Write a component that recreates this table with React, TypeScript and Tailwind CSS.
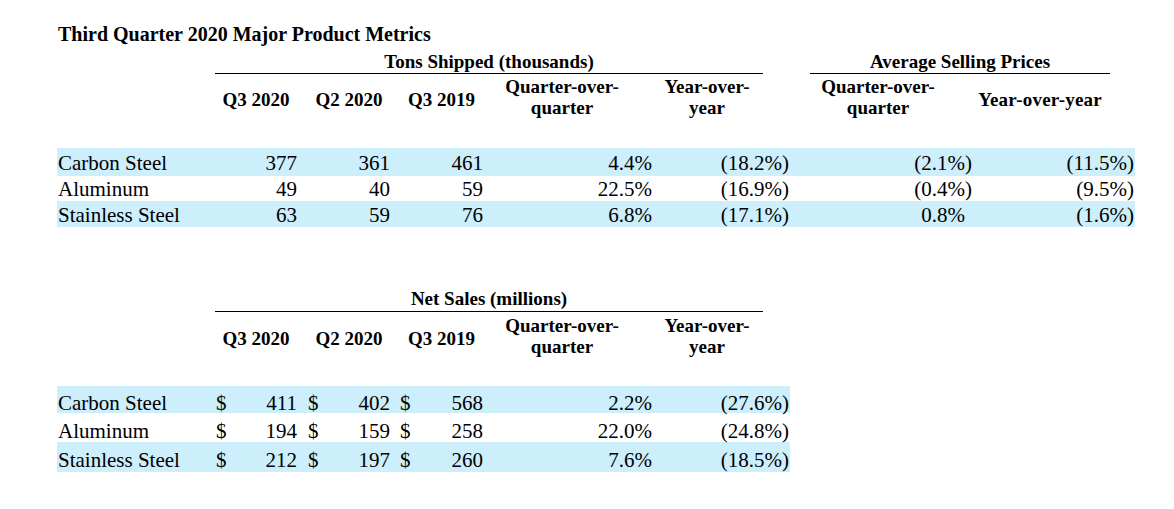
import React from 'react';

const serif = { fontFamily: '"Liberation Serif", "Times New Roman", serif' };

const tonsRows = [
  { label: 'Carbon Steel', vals: ['377', '361', '461', '4.4%', '(18.2%)', '(2.1%)', '(11.5%)'], band: true },
  { label: 'Aluminum', vals: ['49', '40', '59', '22.5%', '(16.9%)', '(0.4%)', '(9.5%)'], band: false },
  { label: 'Stainless Steel', vals: ['63', '59', '76', '6.8%', '(17.1%)', '0.8%', '(1.6%)'], band: true },
];

const salesRows = [
  { label: 'Carbon Steel', vals: ['411', '402', '568', '2.2%', '(27.6%)'], band: true },
  { label: 'Aluminum', vals: ['194', '159', '258', '22.0%', '(24.8%)'], band: false },
  { label: 'Stainless Steel', vals: ['212', '197', '260', '7.6%', '(18.5%)'], band: true },
];

// positive percents keep the room of a closing paren, like the Excel number format
const Pct = ({ v }: { v: string }) => (
  <>
    {v}
    {v.startsWith('(') ? null : <span className="invisible">)</span>}
  </>
);

const rowSizes1 = ['h-[28px] pt-[3px]', 'h-[25px] pt-[1px]', 'h-[26px] pt-[2px]'];
const rowSizes2 = ['h-[27px] pt-[5px]', 'h-[29px] pt-[6px]', 'h-[30px] pt-[6px]'];

const QuarterHeaders = () => (
  <>
    <div className="w-[82px] shrink-0 text-center mt-[4px]">Q3 2020</div>
    <div className="w-[104px] shrink-0 text-center mt-[4px]">Q2 2020</div>
    <div className="w-[81px] shrink-0 text-center mt-[4px]">Q3 2019</div>
    <div className="w-[160px] shrink-0 text-center">
      Quarter-over-
      <br />
      quarter
    </div>
    <div className="w-[130px] shrink-0 text-center">
      Year-over-
      <br />
      year
    </div>
  </>
);

export default function App() {
  return (
    <div className="w-[1174px] h-[509px] bg-white text-black overflow-hidden" style={serif}>
      <div className="pl-[57px] pt-[22px]">
        {/* Title */}
        <h1 className="text-[20px] leading-[24px] font-bold pl-[1px]">
          Third Quarter 2020 Major Product Metrics
        </h1>

        {/* Tons shipped + ASP */}
        <div className="flex mt-[5px] text-[19px] font-bold leading-[22px]">
          <div className="w-[158px] shrink-0" />
          <div className="w-[548px] shrink-0 h-[23px] border-b border-black text-center">
            Tons Shipped (thousands)
          </div>
          <div className="w-[47px] shrink-0" />
          <div className="w-[300px] shrink-0 h-[23px] border-b border-black text-center">
            Average Selling Prices
          </div>
        </div>

        <div className="flex items-center mt-[2px] h-[42px] text-[19px] font-bold leading-[21px]">
          <div className="w-[158px] shrink-0" />
          <QuarterHeaders />
          <div className="w-[212px] shrink-0 text-center">
            Quarter-over-
            <br />
            quarter
          </div>
          <div className="w-[112px] shrink-0 flex justify-center mt-[4px] whitespace-nowrap tracking-[0.2px]">
            Year-over-year
          </div>
        </div>

        <div className="mt-[30px] text-[21px] leading-[25px]">
          {tonsRows.map((r, i) => (
            <div
              key={r.label}
              className={`flex w-[1078px] ${rowSizes1[i]} ${r.band ? 'bg-[#cdeefb]' : ''}`}
            >
              <div className="w-[158px] shrink-0 pl-[1px]">{r.label}</div>
              <div className="w-[82px] shrink-0 text-right">{r.vals[0]}</div>
              <div className="w-[93px] shrink-0 text-right">{r.vals[1]}</div>
              <div className="w-[93px] shrink-0 text-right">{r.vals[2]}</div>
              <div className="w-[176px] shrink-0 text-right">
                <Pct v={r.vals[3]} />
              </div>
              <div className="w-[130px] shrink-0 text-right">
                <Pct v={r.vals[4]} />
              </div>
              <div className="w-[183px] shrink-0 text-right">
                <Pct v={r.vals[5]} />
              </div>
              <div className="w-[162px] shrink-0 text-right">
                <Pct v={r.vals[6]} />
              </div>
            </div>
          ))}
        </div>

        {/* Net sales */}
        <div className="flex mt-[61px] text-[19px] font-bold leading-[22px]">
          <div className="w-[158px] shrink-0" />
          <div className="w-[548px] shrink-0 h-[24px] border-b border-black text-center">
            Net Sales (millions)
          </div>
        </div>

        <div className="flex items-center mt-[3px] h-[42px] text-[19px] font-bold leading-[21px]">
          <div className="w-[158px] shrink-0" />
          <QuarterHeaders />
        </div>

        <div className="mt-[29px] text-[21px] leading-[25px]">
          {salesRows.map((r, i) => (
            <div
              key={r.label}
              className={`flex w-[733px] ${rowSizes2[i]} ${r.band ? 'bg-[#cdeefb]' : ''}`}
            >
              <div className="w-[158px] shrink-0 pl-[1px]">{r.label}</div>
              <div className="w-[82px] shrink-0 flex justify-between pl-[1px]">
                <span>$</span>
                <span>{r.vals[0]}</span>
              </div>
              <div className="w-[93px] shrink-0 flex justify-between pl-[11px]">
                <span>$</span>
                <span>{r.vals[1]}</span>
              </div>
              <div className="w-[93px] shrink-0 flex justify-between pl-[10px]">
                <span>$</span>
                <span>{r.vals[2]}</span>
              </div>
              <div className="w-[176px] shrink-0 text-right">
                <Pct v={r.vals[3]} />
              </div>
              <div className="w-[130px] shrink-0 text-right">
                <Pct v={r.vals[4]} />
              </div>
            </div>
          ))}
        </div>
      </div>
    </div>
  );
}
